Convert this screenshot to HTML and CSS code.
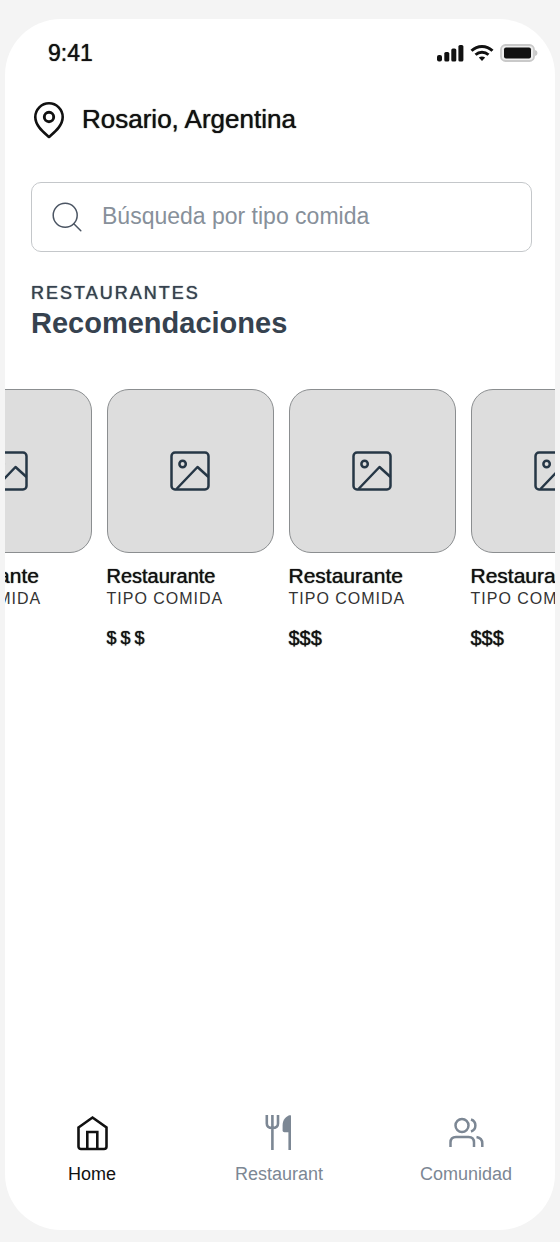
FILE: index.html
```html
<!DOCTYPE html>
<html lang="es">
<head>
<meta charset="utf-8">
<meta name="viewport" content="width=device-width, initial-scale=1">
<title>Restaurantes</title>
<link rel="stylesheet" href="styles.css">
</head>
<body>
<svg class="symbols" aria-hidden="true">
  <symbol id="picture" viewBox="0 0 40 40">
    <g fill="none" stroke="currentColor" stroke-width="2.5" stroke-linejoin="round">
      <rect x="1.500" y="1.500" width="37" height="37" rx="3.500"/>
      <circle cx="12.600" cy="13" r="3.200"/>
      <path d="M6.500 38 27.500 16l11 10"/>
    </g>
  </symbol>
</svg>
<div class="phone">
  <div class="status">
    <span class="time">9:41</span>
    <div class="indicators">
      <svg width="27" height="18" viewBox="0 0 27 18" fill="#111"><rect x="0" y="11" width="5" height="6.5" rx="2"/><rect x="7.3" y="8" width="5" height="9.5" rx="1.6"/><rect x="14.3" y="4.5" width="5" height="13" rx="1.6"/><rect x="21.4" y="1" width="5" height="16.500" rx="1.6"/></svg>
      <svg width="24" height="18" viewBox="0 0 24 18"><g fill="none" stroke="#111" stroke-width="2.900"><path d="M1.500 6.800C7.500 1 16.500 1 22.500 6.800"/><path d="M5.500 10.800C9.300 7.300 14.700 7.300 18.500 10.800"/></g><path d="M8.800 13.500Q12 11.300 15.200 13.500L12 17Z" fill="#111"/></svg>
      <svg width="38" height="18" viewBox="0 0 38 18"><rect x="1" y="1" width="33" height="16" rx="4.500" fill="#eee" stroke="#c9c9c9" stroke-width="1.800"/><rect x="4" y="3.500" width="27" height="11" rx="2" fill="#111"/><path d="M35 6q2.500.5 2.500 3T35 12z" fill="#c9c9c9"/></svg>
    </div>
  </div>
  <header class="location">
    <svg width="32" height="38" viewBox="0 0 32 38" fill="none" stroke="#111" stroke-width="2.600" stroke-linejoin="round"><path d="M16 36C11 31.500 2.300 25 2.300 16A13.700 13.700 0 0 1 29.700 16C29.700 25 21 31.500 16 36Z"/><circle cx="16" cy="16" r="4.700" stroke-width="2.900"/></svg>
    <span>Rosario, Argentina</span>
  </header>
  <main>
    <label class="search">
      <svg width="30" height="30" viewBox="0 0 30 30" fill="none" stroke="#4b5563" stroke-width="1.500" stroke-linecap="round" aria-hidden="true"><circle cx="13.200" cy="13.200" r="12"/><path d="m21.800 21.800 7 7"/></svg>
      <input type="search" placeholder="Búsqueda por tipo comida" aria-label="Búsqueda por tipo comida">
    </label>
    <div class="heading">
      <p>RESTAURANTES</p>
      <h1>Recomendaciones</h1>
    </div>
    <div class="carousel">
      <article class="card"><div class="photo"><svg width="40" height="40"><use href="#picture"/></svg></div><h2>Restaurante</h2><p class="kind">TIPO COMIDA</p><p class="price">$$$</p></article>
      <article class="card current"><div class="photo"><svg width="40" height="40"><use href="#picture"/></svg></div><h2>Restaurante</h2><p class="kind">TIPO COMIDA</p><p class="price">$$$</p></article>
      <article class="card"><div class="photo"><svg width="40" height="40"><use href="#picture"/></svg></div><h2>Restaurante</h2><p class="kind">TIPO COMIDA</p><p class="price">$$$</p></article>
      <article class="card"><div class="photo"><svg width="40" height="40"><use href="#picture"/></svg></div><h2>Restaurante</h2><p class="kind">TIPO COMIDA</p><p class="price">$$$</p></article>
    </div>
  </main>
  <nav class="tabs">
    <button type="button" class="active" aria-current="page">
      <svg width="36" height="38" viewBox="0 0 36 38" fill="none" stroke="currentColor" stroke-width="2.600"><path d="M4.500 13.500 18.500 3.500l14 10V32.500a2.500 2.500 0 0 1-2.500 2.500H7a2.500 2.500 0 0 1-2.500-2.500Z"/><path d="M13.300 35V18h10V35"/></svg>
      <span>Home</span>
    </button>
    <button type="button">
      <svg width="36" height="38" viewBox="0 0 36 38" fill="none" stroke="currentColor" stroke-width="2.600"><path d="M5.800 1v8.500q0 4.500 5.600 4.500T17 9.500V1M11.400 1v35"/><path d="M28.700 1.500v34.500"/><path d="M29.500 1.300C25 2 21.600 6 21.600 11v5.500q0 1.800 1.800 1.800h6.100Z" fill="currentColor" stroke="none"/></svg>
      <span>Restaurant</span>
    </button>
    <button type="button">
      <svg width="36" height="38" viewBox="0 0 36 38" fill="none" stroke="currentColor" stroke-width="2.500"><circle cx="14" cy="11.500" r="6.500"/><path d="M23 5.500a6.300 6.300 0 0 1 0 12M2.500 33v-4.500q0-5.500 5.500-5.500h12.500q5.500 0 5.500 5.500V33M28.500 23q5.800 1 5.800 6.500v3.500"/></svg>
      <span>Comunidad</span>
    </button>
  </nav>
</div>
</body>
</html>
```
FILE: styles.css
```css
* {
  box-sizing: border-box;
}

body {
  margin: 0;
  min-height: 100vh;
  padding: 19px 5px 12px;
  display: flex;
  background: #f4f4f4;
  color: #111;
  font-family: "Liberation Sans", Arial, sans-serif;
}

h1, h2, p {
  margin: 0;
}

svg {
  display: block;
  flex: none;
}

.symbols {
  position: absolute;
  width: 0;
  height: 0;
}

.phone {
  flex: 1;
  min-width: 0;
  display: flex;
  flex-direction: column;
  overflow: hidden;
  background: #fff;
  border-radius: 56px;
}

.status {
  display: flex;
  align-items: center;
  justify-content: space-between;
  padding: 20px 17px 0 43px;
  line-height: 28px;
}

.time {
  font-size: 23px;
  text-shadow: 0 0 1px currentColor;
}

.indicators {
  display: flex;
  gap: 6px;
}

.location {
  display: flex;
  align-items: center;
  gap: 17px;
  padding: 34px 28px 0;
  font-size: 26px;
  line-height: 36px;
  text-shadow: 0 0 1px currentColor;
}

.location span {
  padding-bottom: 2px;
}

main {
  flex: 1;
}

.search {
  display: flex;
  align-items: center;
  gap: 20px;
  height: 70px;
  margin: 43px 23px 0 26px;
  padding: 0 20px;
  border: 1px solid #c4c7ca;
  border-radius: 10px;
}

.search input {
  flex: 1;
  min-width: 0;
  padding: 0 0 2px;
  border: 0;
  outline: 0;
  background: none;
  color: #111;
  font: inherit;
  font-size: 23px;
}

.search input::placeholder {
  color: #87909a;
  opacity: 1;
}

.heading {
  padding: 29px 26px 0;
  color: #36424f;
}

.heading p {
  font-size: 18px;
  line-height: 24px;
  letter-spacing: 2px;
  text-shadow: 0 0 1px currentColor;
}

.heading h1 {
  font-size: 29px;
  line-height: 36px;
}

.carousel {
  display: flex;
  justify-content: center;
  gap: 15px;
  margin-top: 48px;
  padding-left: 2px;
}

.card {
  flex: none;
  width: 167px;
}

.photo {
  display: flex;
  align-items: center;
  justify-content: center;
  height: 164px;
  margin-bottom: 10px;
  border: 1px solid #8b8e90;
  border-radius: 22px;
  background: #ddd;
  color: #263746;
}

.card h2 {
  font-size: 21px;
  font-weight: 400;
  line-height: 26px;
  text-shadow: 0 0 1px currentColor;
}

.kind {
  font-size: 16px;
  line-height: 20px;
  letter-spacing: 1px;
  color: #333;
}

.price {
  margin-top: 16px;
  font-size: 20px;
  line-height: 26px;
  text-shadow: 0 0 1px currentColor;
}

.current h2 {
  font-size: 20px;
}

.current .price {
  font-size: 18px;
  letter-spacing: 4px;
}

.tabs {
  display: flex;
  justify-content: space-between;
  padding: 0 41px 44px 39px;
}

.tabs button {
  display: flex;
  flex-direction: column;
  align-items: center;
  gap: 10px;
  width: 96px;
  padding: 0;
  border: 0;
  background: none;
  color: #7c8794;
  font: inherit;
  font-size: 18px;
  line-height: 24px;
}

.tabs .active {
  color: #111;
}
```
